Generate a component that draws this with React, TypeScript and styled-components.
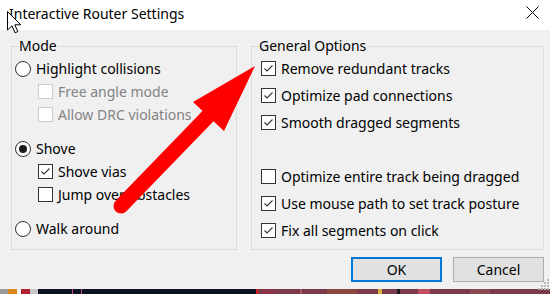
import styled, { createGlobalStyle } from "styled-components";

const GlobalStyle = createGlobalStyle`
  html, body {
    margin: 0;
    padding: 0;
    background: #f0f0f0;
  }
  body {
    font-family: "Noto Sans", "Open Sans", sans-serif;
  }
`;

const UI_FONT = `"Noto Sans", "Open Sans", sans-serif`;

type Item = { label: string; kind: "radio" | "check"; checked?: boolean; disabled?: boolean; indent?: boolean; spaceBefore?: boolean };

const modeItems: Item[] = [
  { label: "Highlight collisions", kind: "radio" },
  { label: "Free angle mode", kind: "check", disabled: true, indent: true },
  { label: "Allow DRC violations", kind: "check", disabled: true, indent: true },
  { label: "Shove", kind: "radio", checked: true, spaceBefore: true },
  { label: "Shove vias", kind: "check", checked: true, indent: true },
  { label: "Jump over obstacles", kind: "check", indent: true },
  { label: "Walk around", kind: "radio", spaceBefore: true },
];

const generalItems: Item[] = [
  { label: "Remove redundant tracks", kind: "check", checked: true },
  { label: "Optimize pad connections", kind: "check", checked: true },
  { label: "Smooth dragged segments", kind: "check", checked: true },
  { label: "Optimize entire track being dragged", kind: "check", spaceBefore: true },
  { label: "Use mouse path to set track posture", kind: "check", checked: true },
  { label: "Fix all segments on click", kind: "check", checked: true },
];

function Control({ item }: { item: Item }) {
  if (item.kind === "radio") {
    return <RadioCircle>{item.checked && <RadioDot />}</RadioCircle>;
  }
  return (
    <CheckBox $disabled={item.disabled}>
      {item.checked && (
        <svg width="13" height="13" viewBox="0 0 13 13">
          <polyline points="2.5,6.5 5,9 10.5,3.5" fill="none" stroke="#333" strokeWidth="1.1" />
        </svg>
      )}
    </CheckBox>
  );
}

export default function App() {
  return (
    <Window>
      <GlobalStyle />
      <TitleBar>
        <Title>Interactive Router Settings</Title>
        <CloseIcon width="13" height="13" viewBox="0 0 13 13">
          <path d="M0.5 0.5 L12.5 12.5 M12.5 0.5 L0.5 12.5" stroke="#000" strokeWidth="1" />
        </CloseIcon>
      </TitleBar>

      <Body>
        <Groups>
          <Group $width={226}>
            <Legend>Mode</Legend>
            <OptionList $padTop={2} $padLeft={4}>
              {modeItems.map((item) => (
                <Option key={item.label} $rowHeight={23} $indent={item.indent ? 23 : 0} $spaceBefore={item.spaceBefore ? 11 : 0}>
                  <Control item={item} />
                  <OptionLabel $disabled={item.disabled}>{item.label}</OptionLabel>
                </Option>
              ))}
            </OptionList>
          </Group>
          <Group>
            <Legend>General Options</Legend>
            <OptionList $padTop={0} $padLeft={10}>
              {generalItems.map((item) => (
                <Option key={item.label} $rowHeight={27} $indent={0} $spaceBefore={item.spaceBefore ? 27 : 0}>
                  <Control item={item} />
                  <OptionLabel>{item.label}</OptionLabel>
                </Option>
              ))}
            </OptionList>
          </Group>
        </Groups>
        <ButtonRow>
          <DialogButton $primary>OK</DialogButton>
          <DialogButton>Cancel</DialogButton>
        </ButtonRow>
      </Body>

      {/* bit of the pcb editor peeking out underneath the dialog */}
      <BoardStrip width="550" height="5" viewBox="0 0 550 5" preserveAspectRatio="none">
        <rect x="0" y="0" width="550" height="5" fill="#7a3a4a" />
        <rect x="0" y="0" width="8" height="5" fill="#9a9a9a" />
        <rect x="8" y="0" width="9" height="5" fill="#d88a1c" />
        <rect x="17" y="0" width="4" height="5" fill="#f4f4f4" />
        <rect x="21" y="0" width="9" height="5" fill="#b02030" />
        <rect x="30" y="0" width="8" height="5" fill="#c8c8c8" />
        <rect x="38" y="0" width="218" height="5" fill="#0b1322" />
        <rect x="72" y="0" width="1" height="5" fill="#c04a8a" />
        <rect x="81" y="0" width="1" height="5" fill="#c04a8a" />
        <rect x="256" y="0" width="2" height="5" fill="#d02020" />
        <rect x="262" y="0" width="14" height="5" fill="#8a3648" />
        <rect x="300" y="0" width="2" height="5" fill="#a85a5a" />
        <rect x="327" y="0" width="30" height="5" fill="#8a4a40" />
        <rect x="378" y="0" width="4" height="5" fill="#d4b040" />
        <rect x="397" y="0" width="3" height="5" fill="#1a1a1a" />
        <rect x="418" y="0" width="12" height="5" fill="#c05060" />
        <rect x="470" y="0" width="20" height="5" fill="#8a4a50" />
      </BoardStrip>

      <Grip width="12" height="12" viewBox="0 0 12 12">
        {[
          [9, 1], [6, 4], [9, 4], [3, 7], [6, 7], [9, 7], [0, 10], [3, 10], [6, 10], [9, 10],
        ].map(([x, y]) => (
          <rect key={`${x}-${y}`} x={x} y={y} width="2" height="2" fill="#b8b8b8" />
        ))}
      </Grip>

      <Annotation width="550" height="294" viewBox="0 0 550 294">
        <line x1="121" y1="206" x2="212" y2="112" stroke="#ff0000" strokeWidth="15" strokeLinecap="round" />
        <polygon points="255,66 193,102 224,131" fill="#ff0000" />
      </Annotation>

      <Cursor width="16" height="26" viewBox="0 0 16 26">
        <path
          d="M0.5 0.5 L0.5 19 L5 14.8 L8 21.8 L10.8 20.6 L7.8 13.8 L13.8 13.8 Z"
          fill="#fff"
          stroke="#000"
          strokeWidth="1"
          strokeLinejoin="round"
        />
      </Cursor>
    </Window>
  );
}

const Window = styled.div`
  position: relative;
  width: 550px;
  height: 294px;
  overflow: hidden;
  display: flex;
  flex-direction: column;
  background: #f0f0f0;
  font-family: ${UI_FONT};
  color: #000;
`;

const TitleBar = styled.div`
  height: 30px;
  flex: none;
  background: #ffffff;
  display: flex;
  align-items: center;
  justify-content: space-between;
  padding: 0 11px 2px 9px;
  box-sizing: border-box;
`;

const Title = styled.div`
  font-size: 14px;
  line-height: 20px;
`;

const CloseIcon = styled.svg`
  display: block;
  margin-top: -3px;
`;

const Body = styled.div`
  height: 259px;
  flex: none;
  box-sizing: border-box;
  padding: 7px 6px 0 11px;
  display: flex;
  flex-direction: column;
`;

const Groups = styled.div`
  display: flex;
  gap: 14px;
  height: 213px;
`;

const Group = styled.fieldset<{ $width?: number }>`
  margin: 0;
  min-width: 0;
  box-sizing: border-box;
  height: 213px;
  border: 1px solid #dcdcdc;
  padding: 0;
  ${(p) => (p.$width ? `width: ${p.$width}px; flex: none;` : `flex: 1;`)}
`;

const Legend = styled.legend`
  font-size: 14px;
  line-height: 18px;
  padding: 0 1px;
  margin-left: 6px;
`;

const OptionList = styled.div<{ $padTop: number; $padLeft: number }>`
  display: flex;
  flex-direction: column;
  padding: ${(p) => p.$padTop}px 0 0 ${(p) => p.$padLeft - 1}px;
`;

const Option = styled.div<{ $rowHeight: number; $indent: number; $spaceBefore: number }>`
  height: ${(p) => p.$rowHeight}px;
  flex: none;
  display: flex;
  align-items: center;
  gap: 5px;
  padding-left: ${(p) => p.$indent}px;
  margin-top: ${(p) => p.$spaceBefore}px;
  white-space: nowrap;
`;

const OptionLabel = styled.span<{ $disabled?: boolean }>`
  font-size: 14px;
  line-height: 20px;
  color: ${(p) => (p.$disabled ? "#838383" : "#000")};
`;

const RadioCircle = styled.span`
  width: 16px;
  height: 16px;
  box-sizing: border-box;
  border: 1px solid #333333;
  border-radius: 50%;
  background: #ffffff;
  display: flex;
  align-items: center;
  justify-content: center;
  flex: none;
`;

const RadioDot = styled.span`
  width: 8px;
  height: 8px;
  border-radius: 50%;
  background: #1a1a1a;
`;

const CheckBox = styled.span<{ $disabled?: boolean }>`
  width: 15px;
  height: 15px;
  box-sizing: border-box;
  border: 1px solid ${(p) => (p.$disabled ? "#cccccc" : "#333333")};
  background: #ffffff;
  display: flex;
  align-items: center;
  justify-content: center;
  flex: none;
`;

const ButtonRow = styled.div`
  display: flex;
  justify-content: flex-end;
  gap: 11px;
  margin-top: 7px;
`;

const DialogButton = styled.button<{ $primary?: boolean }>`
  width: 91px;
  height: 25px;
  box-sizing: border-box;
  background: #e1e1e1;
  border: ${(p) => (p.$primary ? "2px solid #0078d7" : "1px solid #adadad")};
  font-family: ${UI_FONT};
  font-size: 14px;
  line-height: 18px;
  color: #000;
  padding: 0;
`;

const BoardStrip = styled.svg`
  display: block;
  flex: none;
`;

const Grip = styled.svg`
  position: absolute;
  right: 0;
  bottom: 4px;
`;

const Annotation = styled.svg`
  position: absolute;
  left: 0;
  top: 0;
  pointer-events: none;
`;

const Cursor = styled.svg`
  position: absolute;
  left: 7px;
  top: 11px;
`;
